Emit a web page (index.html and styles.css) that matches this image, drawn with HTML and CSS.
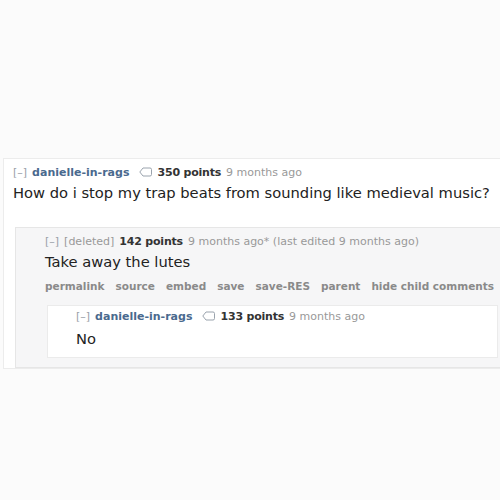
FILE: index.html
```html
<!DOCTYPE html>
<html>
<head>
<meta charset="utf-8">
<link rel="stylesheet" href="styles.css">
</head>
<body>
<div class="page">
  <div class="comment top">
    <div class="tagline">
      <span class="expand">[–]</span>
      <span class="author">danielle-in-rags</span>
      <svg class="bubble" width="13" height="10" viewBox="0 0 13 10"><path d="M4 1 H11 A1.5 1.5 0 0 1 12.5 2.5 V7.5 A1.5 1.5 0 0 1 11 9 H4 L0.8 5 Z" fill="#fff" stroke="#9aa3ad" stroke-width="1"/></svg>
      <span class="score">350 points</span>
      <span class="time">9 months ago</span>
    </div>
    <div class="body">How do i stop my trap beats from sounding like medieval music?</div>
    <div class="comment child">
      <div class="tagline">
        <span class="expand">[–]</span>
        <span class="deleted">[deleted]</span>
        <span class="score">142 points</span>
        <span class="time">9 months ago* (last edited 9 months ago)</span>
      </div>
      <div class="body">Take away the lutes</div>
      <div class="buttons">
        <span>permalink</span><span>source</span><span>embed</span><span>save</span><span>save-RES</span><span>parent</span><span>hide child comments</span>
      </div>
      <div class="comment grandchild">
        <div class="tagline">
          <span class="expand">[–]</span>
          <span class="author">danielle-in-rags</span>
          <svg class="bubble" width="13" height="10" viewBox="0 0 13 10"><path d="M4 1 H11 A1.5 1.5 0 0 1 12.5 2.5 V7.5 A1.5 1.5 0 0 1 11 9 H4 L0.8 5 Z" fill="#fff" stroke="#9aa3ad" stroke-width="1"/></svg>
          <span class="score">133 points</span>
          <span class="time">9 months ago</span>
        </div>
        <div class="body">No</div>
      </div>
    </div>
  </div>
</div>
</body>
</html>
```
FILE: styles.css
```css
html, body {
  margin: 0;
  padding: 0;
  background: #fbfbfb;
  width: 500px;
  height: 500px;
  overflow: hidden;
}
.page {
  padding-top: 158px;
  font-family: "DejaVu Sans", Verdana, sans-serif;
}
.comment.top {
  margin-left: 3px;
  border: 1px solid #ececec;
  border-right: none;
  background: #fff;
  padding: 6px 0 0 9px;
}
.tagline {
  font-size: 11px;
  color: #999;
  display: flex;
  align-items: center;
  gap: 5px;
  height: 14px;
  white-space: nowrap;
}
.expand { color: #9aa0a8; }
.author { color: #4a6a8e; font-weight: bold; }
.deleted { color: #999; }
.score { color: #333; font-weight: bold; letter-spacing: -0.2px; }
.time { color: #999; }
.bubble { margin-left: 5px; }
.body {
  font-size: 14.7px;
  color: #222;
  margin-top: 5px;
  line-height: 18px;
  white-space: nowrap;
}
.comment.child {
  margin: 25px 0 0 2px;
  border: 1px solid #e6e6e6;
  border-right: none;
  background: #f6f6f7;
  padding: 6px 0 0 29px;
}
.buttons {
  font-size: 10.5px;
  font-weight: bold;
  color: #8a8a8a;
  display: flex;
  gap: 11px;
  margin-top: 9px;
  white-space: nowrap;
}
.comment.grandchild {
  margin: 13px 2px 9px 2px;
  border: 1px solid #ebebeb;
  background: #fff;
  padding: 3px 0 9px 28px;
}
.comment.grandchild .body { margin-top: 7px; }
```
